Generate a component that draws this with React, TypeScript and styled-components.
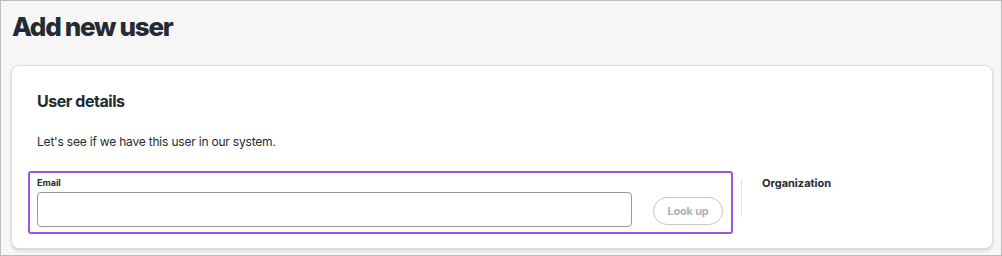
import React from "react";
import styled, { createGlobalStyle } from "styled-components";

const GlobalStyle = createGlobalStyle`
  html, body {
    margin: 0;
    padding: 0;
    background: #f6f6f6;
  }
  body {
    font-family: Inter, "Noto Sans", sans-serif;
    color: #232a31;
  }
`;

const Page = styled.div`
  box-sizing: border-box;
  width: 1002px;
  height: 256px;
  border: 1px solid #bdbdbd;
  background: #f6f6f6;
  padding: 0 8px 0 10px;
  overflow: hidden;
`;

const Title = styled.h1`
  margin: 0;
  padding: 10px 0 0 1px;
  font-size: 26px;
  line-height: 32px;
  font-weight: 800;
  letter-spacing: -1.3px;
  color: #232a31;
`;

const Card = styled.section`
  box-sizing: border-box;
  margin-top: 22px;
  height: 184px;
  background: #fff;
  border: 1px solid #dcdcdc;
  border-radius: 8px;
  box-shadow: 0 2px 3px rgba(0, 0, 0, 0.12);
  padding: 24px 24px 0 16px;
`;

const CardTitle = styled.h2`
  margin: 0 0 0 9px;
  font-size: 16px;
  line-height: 22px;
  font-weight: 700;
  letter-spacing: -0.45px;
`;

const Intro = styled.p`
  margin: 21px 0 0 9px;
  font-size: 12px;
  line-height: 18px;
  letter-spacing: -0.2px;
`;

const Row = styled.div`
  display: flex;
  align-items: flex-start;
  margin-top: 20px;
`;

const Highlight = styled.div`
  box-sizing: border-box;
  width: 705px;
  height: 63px;
  border: 2px solid #9a55e6;
  border-radius: 3px;
  padding: 6px 8px 0 7px;
  display: flex;
  align-items: flex-end;
  gap: 21px;
`;

const Field = styled.div`
  display: flex;
  flex-direction: column;
  flex: 1;
`;

const Label = styled.label<{ $size?: number }>`
  font-size: ${(p) => p.$size ?? 9}px;
  line-height: 14px;
  font-weight: 700;
  color: #232a31;
`;

const Input = styled.input`
  box-sizing: border-box;
  margin: 2px 0 5px;
  height: 35px;
  width: 100%;
  border: 1px solid #979797;
  border-radius: 4px;
  background: #fff;
  outline: none;
`;

const Button = styled.button`
  box-sizing: border-box;
  width: 70px;
  height: 28px;
  margin-bottom: 7px;
  border: 1px solid #c7c7c7;
  border-radius: 14px;
  background: #fff;
  color: #b0b0b0;
  font-family: Inter, sans-serif;
  font-size: 11px;
  font-weight: 700;
  letter-spacing: -0.2px;
`;

const Divider = styled.div`
  width: 1px;
  height: 38px;
  margin: 8px 20px 0 8px;
  background: #e4e4e4;
`;

const Side = styled.div`
  padding-top: 0;
`;

export default function App() {
  return (
    <>
      <GlobalStyle />
      <Page>
        <Title>Add new user</Title>
        <Card>
          <CardTitle>User details</CardTitle>
          <Intro>Let's see if we have this user in our system.</Intro>
          <Row>
            <Highlight>
              <Field>
                <Label>Email</Label>
                <Input type="email" />
              </Field>
              <Button type="button">Look up</Button>
            </Highlight>
            <Divider />
            <Side>
              <Label $size={11}>Organization</Label>
            </Side>
          </Row>
        </Card>
      </Page>
    </>
  );
}
